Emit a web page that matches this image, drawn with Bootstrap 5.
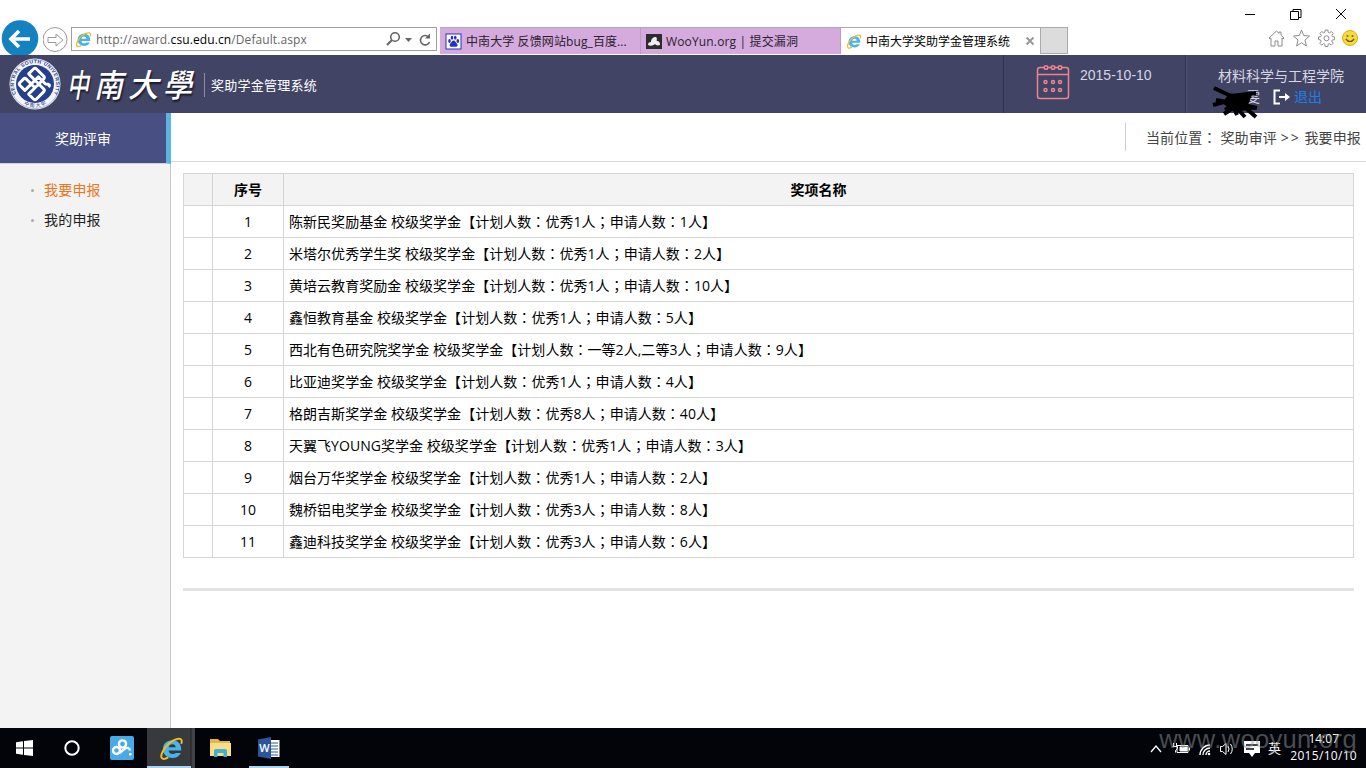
<!DOCTYPE html>
<html lang="zh-CN">
<head>
<meta charset="utf-8">
<title>中南大学奖助学金管理系统</title>
<link rel="stylesheet" href="https://cdn.jsdelivr.net/npm/bootstrap@5.3.0/dist/css/bootstrap.min.css">
<style>
body{width:1366px;height:768px;overflow:hidden;font:14px/20px "Open Sans","Noto Sans CJK SC",sans-serif;color:#000;background:#fff}
svg{display:block;flex:none}
.browser{height:55px}
.back{width:43px;height:35px;overflow:hidden}
.fwd{width:28px;margin-bottom:2px}
.address{width:366px;height:24px;border:1px solid #a0a0a0;margin-bottom:4px;padding-left:3px;color:#666;font-size:12px}
.address .url{letter-spacing:.1px;margin-left:4px;padding-top:1px}
.address b{font-weight:400;color:#000}
.tabs{height:28px;margin-left:3px;font-size:12px;border-bottom:1px solid #fff}
.tab-item{height:27px;border-top:1px solid #b9a3bd;background:#d4abdc;color:#2b2030;padding-left:5px;gap:4px;white-space:nowrap;border-right:1px solid #c19ac9}
.tab-item span{padding-top:1px}
.tab-item.current{background:#fff;color:#000;border-color:#aaa}
.newtab{width:27px;height:27px;background:#dcdcdc;border:1px solid #aaa;border-left:0}
.controls{width:126px;height:55px}
.winrow{height:28px;padding:8px 19px 0 5px}
.favrow{gap:8px;padding:1px 0 0 28px}
.site-head{height:58px;background:#424465;color:#d6d6e4}
.emblem{margin:2px 0 0 8px}
.brandname{width:142px;height:58px;padding-left:5px;font:italic 500 32px/56px "Noto Sans CJK TC",sans-serif;color:#fff;text-shadow:1px 2px 2px #15172c}
.brandname span{display:block;width:34px;transform:scaleX(var(--sx,.9));transform-origin:left}
.brandsub{border-left:1px solid #8d8da5;font-size:13px;line-height:24px;color:#fff;padding-left:6px;letter-spacing:.25px;margin-top:1px}
.datebox{width:182px;border-left:1px solid #30314e;padding:8px 0 0 32px;gap:10px;font:14px/24px "Liberation Sans",sans-serif}
.userbox{width:181px;border-left:1px solid #30314e;box-shadow:inset 1px 0 #4d4e72;padding:10px 0 0 32px}
.logout{color:#1b7ee8}
.main-area{height:615px}
.side{width:171px;background:#f3f3f3;border-right:1px solid #c4c4c4}
.side h2{width:171px;height:51px;background:#474f83;border-right:5px solid #59b4e1;border-bottom:1px solid #d0d2dd;color:#fff;font-size:14px;line-height:52px;margin:0;text-align:center}
.side ul{padding:11px 0 0 29px;margin:0;color:#222}
.side li{height:30px;gap:9px;letter-spacing:.2px}
.side li::before{content:"";width:3px;height:3px;border-radius:50%;background:#aaa;margin:0 1px 0 2px}
.side .on{color:#ee7520}
.crumbs{height:49px;border-bottom:1px solid #d9d9d9;color:#444}
.crumbs div{height:28px;border-left:1px solid #ccc;padding:5px 5px 0 20px;margin-top:10px;white-space:pre;letter-spacing:.13px}
.crumbs i{font-style:normal;letter-spacing:2px}
.awards{width:1171px;margin:11px 0 0 12px;border-collapse:collapse;table-layout:fixed}
.awards th,.awards td{height:32px;border:1px solid #d6d6d6;padding:1px 5px 0;text-align:center;line-height:20px;white-space:nowrap}
.awards th{background:#f3f3f3;font-weight:700}
.awards td:last-child{text-align:left;letter-spacing:.04px}
.pc{font-family:"Noto Sans CJK TC",sans-serif;line-height:1}
.rule{width:1171px;height:3px;background:#e3e3e3;margin:30px 0 0 12px}
.taskbar{height:40px;background:#02040a;color:#fff}
.task{height:40px;width:48px}
.task.active-app{background:linear-gradient(90deg,#38393d 43px,#222 44px,#424347 45px);margin-left:1px}
.task.active-app::after,.task.word::after{content:"";position:absolute;left:0;bottom:0;height:2px;width:44px;background:#a9d3ee}
.task.word{width:40px;margin-left:6px}.task.word::after{width:40px}
.tray{font-size:12px;line-height:17px;padding-right:9px}
.clock{text-align:right;width:68px;padding-right:0}
.watermark{position:absolute;right:9px;bottom:15px;font:25.5px/28px "Liberation Sans",sans-serif;letter-spacing:.35px;color:rgba(150,150,150,.5);white-space:nowrap}
.scribble{position:absolute;left:25px;top:31px}
</style>
</head>
<body class="d-flex flex-column">
<svg width="0" height="0" class="position-absolute"><defs>
<symbol id="ie" viewBox="0 0 24 24"><path d="M21 16.200c-1.400 3-4.400 4.800-8.200 4.800-5.400 0-9-3.300-9-8.500C3.800 7.500 7.500 4 12.800 4c5.600 0 8.800 3.500 8.600 10H9.200c.2 2.200 1.600 3.300 3.700 3.300 1.500 0 2.500-.4 3-1.100z M9.300 10.800h6.800c-.2-1.900-1.400-2.900-3.300-2.900s-3.100 1.100-3.500 2.900z" fill="#48b4ea" fill-rule="evenodd"/><path d="M21.300 7.500c1-2.200.7-4.100-.9-4.700C17.500 1.700 10.500 5 6.400 10.400 2.300 15.700.9 20.600 3.500 21.800c1.300.6 3.200 0 5.400-1.300" fill="none" stroke="#f2bb25" stroke-width="1.900"/></symbol>
</defs></svg>

<header class="browser d-flex align-items-end">
  <div class="back"><svg width="43" height="37"><circle cx="20" cy="18.500" r="18.300" fill="#1482c0"/><path d="M30 19H13M19 11l-8 8 8 8" fill="none" stroke="#fff" stroke-width="3.600"/></svg></div>
  <div class="fwd"><svg width="26" height="27"><circle cx="12" cy="13.500" r="12" fill="#fff" stroke="#999"/><path d="M5 11.500h8V8l7 6-7 6v-3.500H5z" fill="none" stroke="#999"/></svg></div>
  <div class="address d-flex align-items-center">
    <svg width="17" height="17"><use href="#ie"/></svg>
    <span class="url flex-grow-1">http://award.<b>csu.edu.cn</b>/Default.aspx</span>
    <svg width="52" height="20" fill="none" stroke="#666"><circle cx="11" cy="8" r="4.300" stroke-width="1.600"/><path d="M8 11l-5 5" stroke-width="2.200"/><path d="M21 9h7l-3.500 4z" fill="#666" stroke="none"/><path d="M45 8.500A4.700 4.700 0 1 0 45.500 13" stroke-width="1.600"/><path d="M46 4.500v5h-5z" fill="#666" stroke="none"/></svg>
  </div>
  <nav class="tabs d-flex">
    <div class="tab-item d-flex align-items-center" style="width:201px"><svg width="17" height="17"><rect x="1" y="1" width="15" height="15" fill="#fff" stroke="#2530c8"/><g fill="#2530c8"><ellipse cx="4.500" cy="8" rx="1.300" ry="1.900"/><ellipse cx="7" cy="4.700" rx="1.300" ry="1.900"/><ellipse cx="10.300" cy="4.700" rx="1.300" ry="1.900"/><ellipse cx="12.800" cy="8" rx="1.300" ry="1.900"/><path d="M8.600 7.500c1.600 0 2 1.800 3.200 3 1.600 1.700.6 3.500-1.400 3.300-1.200-.2-2.200-.2-3.400 0-2 .3-3.200-1.500-1.600-3.200 1.200-1.200 1.600-3.100 3.200-3.100z"/></g></svg><span style="letter-spacing:.1px">中南大学 反馈网站bug_百度...</span></div>
    <div class="tab-item d-flex align-items-center" style="width:200px"><svg width="16" height="17"><rect y="1" width="16" height="15" fill="#2c2c2c"/><path d="M2 12c0-2 1-3 3-3 0-3 2-5 5-5 2 2 0 3 1 4 2 0 3 1 3 4-3 1-4 0-5-1-2 2-5 2-7 1z" fill="#eee"/></svg><span style="letter-spacing:.15px">WooYun.org | 提交漏洞</span></div>
    <div class="tab-item current d-flex align-items-center" style="width:200px"><svg width="16" height="17"><use href="#ie"/></svg><span class="flex-grow-1">中南大学奖助学金管理系统</span><svg width="10" height="10" style="margin-right:5px"><path d="M1.500 1.500l7 7m0-7l-7 7" stroke="#999" stroke-width="2"/></svg></div>
    <div class="newtab"></div>
  </nav>
  <div class="controls ms-auto">
    <div class="winrow d-flex justify-content-between"><svg width="11" height="12"><path d="M0 6.500h10" stroke="#000"/></svg><svg width="12" height="12" fill="none" stroke="#000"><path d="M.5 3.500h8v8h-8zM3 3.500v-2h8v8H9"/></svg><svg width="12" height="12"><path d="M1 1l10 10m0-10L1 11" stroke="#000"/></svg></div>
    <div class="favrow d-flex align-items-center"><svg width="17" height="18" fill="none" stroke="#8c8c8c"><path d="M1 9l7.500-7L11 4.300V3h2v3.200L16 9l-1 1-1-.8V17h-4v-5H7v5H3V9.200l-1 .8z"/></svg><svg width="17" height="18" fill="none" stroke="#8c8c8c"><path d="M8.500 1l2.200 5.500 5.800.5L12 11l1.400 6-4.900-3.300L3.600 17 5 11 .5 7l5.800-.5z"/></svg><svg width="17" height="18" fill="none" stroke="#8c8c8c"><path d="M7.200 1h2.600l.4 2.300 1.300.6L13.400 2.500l1.800 1.900-1.300 1.900.5 1.300 2.200.4v2.600l-2.300.4-.5 1.300 1.400 1.900-1.900 1.900-1.900-1.400-1.200.5-.4 2.300H7.200l-.4-2.300-1.300-.5-1.900 1.400-1.800-1.900 1.300-1.900-.5-1.300L.5 10.600V8l2.200-.4.600-1.300L1.900 4.400l1.800-1.900 1.900 1.400 1.200-.6z"/><circle cx="8.500" cy="9.300" r="2.500"/></svg><svg width="17" height="18" style="margin-left:-1px"><circle cx="8" cy="9" r="7.500" fill="#f9d936" stroke="#d6ac28"/><circle cx="5.500" cy="7" r="1.100" fill="#674"/><circle cx="10.500" cy="7" r="1.100" fill="#674"/><path d="M3.800 10q4.200 5 8.400 0" fill="none" stroke="#665022" stroke-width="1.200"/></svg></div>
  </div>
</header>

<section class="site-head d-flex">
  <svg class="emblem" width="54" height="54" viewBox="0 0 54 54"><circle cx="27" cy="27" r="25.500" fill="#f2f4fa"/><circle cx="27" cy="27" r="24.500" fill="none" stroke="#8790b8" stroke-width=".6"/><circle cx="27" cy="27" r="19" fill="#24408c"/><path id="arc" d="M8.400 37A21 21 0 1 1 45.600 37" fill="none"/><text font-family="Liberation Sans" font-size="5" font-weight="700" fill="#33427f" textLength="86"><textPath href="#arc">CENTRAL SOUTH UNIVERSITY</textPath></text><path id="arc2" d="M15 46.800A23 23 0 0 0 39 46.800" fill="none"/><text font-family="Noto Sans CJK SC" font-size="5" fill="#33427f"><textPath href="#arc2" startOffset="1">中 南 大 学</textPath></text><g transform="translate(27 27) rotate(45) scale(1.060)" fill="none" stroke="#fff" stroke-width="2.700" stroke-linejoin="round"><path d="M2.500-2.500V-9Q2.500-11 .5-11H-9Q-11-11-11-9V-2.500H2.500M2.500-2.500H9Q11-2.500 11-.5V9Q11 11 9 11H2.500V-2.500M2.500 2.500H-9Q-11 2.500-11 4.500V9Q-11 11-9 11H-2.500V-7M-2.500 2.500V-7H7Q11-11 11-7"/></g></svg>
  <div class="brandname d-flex"><span style="--sx:.68;width:27px">中</span><span>南</span><span style="width:35px;--sx:.95">大</span><span>學</span></div>
  <div class="align-self-center"><div class="brandsub">奖助学金管理系统</div></div>
  <div class="datebox ms-auto d-flex"><svg width="34" height="38" fill="none" stroke="#ef8390" stroke-width="1.500"><rect x="1.500" y="4.500" width="31" height="31" rx="2.500"/><path d="M2 11.500h30"/><g fill="#424465"><circle cx="10" cy="4.500" r="1.800"/><circle cx="17" cy="4.500" r="1.800"/><circle cx="24" cy="4.500" r="1.800"/><circle cx="9.500" cy="19" r="1.500"/><circle cx="17" cy="19" r="1.500"/><circle cx="24" cy="19" r="1.500"/><circle cx="9.500" cy="27" r="1.500"/><circle cx="17" cy="27" r="1.500"/><circle cx="24" cy="27" r="1.500"/></g></svg><span>2015-10-10</span></div>
  <div class="userbox position-relative"><div class="text-nowrap" style="line-height:22px">材料科学与工程学院</div>
    <div class="d-flex align-items-center"><span style="width:55px;padding-left:28px">雯</span><svg width="18" height="16" fill="none" stroke="#fff" stroke-width="2"><path d="M7 1.500H1.500v13H7M6 8h9"/><path d="M12 4l5 4-5 4z" fill="#fff" stroke="none"/></svg><a class="logout text-decoration-none" style="margin-left:3px" href="#">退出</a></div>
    <svg class="scribble" width="50" height="34" fill="none" stroke="#000" stroke-width="4"><path d="M3 2L20 10 45 7M2 19L20 14M5 14L38 20M14 24L26 16M13 28L28 18 46 22M24 20L34 31M30 18L45 31M22 20L26 29"/><path d="M18 8L40 10 36 20 44 23 22 25 12 17z" fill="#000" stroke-width="1"/></svg>
  </div>
</section>

<main class="main-area d-flex">
  <aside class="side flex-shrink-0"><h2 class="fw-normal">奖助评审</h2><ul class="list-unstyled"><li class="d-flex align-items-center on">我要申报</li><li class="d-flex align-items-center">我的申报</li></ul></aside>
  <div class="flex-grow-1">
    <div class="crumbs d-flex justify-content-end"><div>当前位置<span class="pc" lang="zh-TW">：</span> 奖助审评 <i>&gt;&gt;</i> 我要申报</div></div>
    <table class="awards">
      <colgroup><col style="width:29px"><col style="width:71px"><col></colgroup>
      <thead><tr><th></th><th>序号</th><th>奖项名称</th></tr></thead>
      <tbody>
      <tr><td></td><td>1</td><td>陈新民奖励基金 校级奖学金【计划人数<span class="pc" lang="zh-TW">：</span>优秀1人<span class="pc" lang="zh-TW">；</span>申请人数<span class="pc" lang="zh-TW">：</span>1人】</td></tr>
      <tr><td></td><td>2</td><td>米塔尔优秀学生奖 校级奖学金【计划人数<span class="pc" lang="zh-TW">：</span>优秀1人<span class="pc" lang="zh-TW">；</span>申请人数<span class="pc" lang="zh-TW">：</span>2人】</td></tr>
      <tr><td></td><td>3</td><td>黄培云教育奖励金 校级奖学金【计划人数<span class="pc" lang="zh-TW">：</span>优秀1人<span class="pc" lang="zh-TW">；</span>申请人数<span class="pc" lang="zh-TW">：</span>10人】</td></tr>
      <tr><td></td><td>4</td><td>鑫恒教育基金 校级奖学金【计划人数<span class="pc" lang="zh-TW">：</span>优秀1人<span class="pc" lang="zh-TW">；</span>申请人数<span class="pc" lang="zh-TW">：</span>5人】</td></tr>
      <tr><td></td><td>5</td><td>西北有色研究院奖学金 校级奖学金【计划人数<span class="pc" lang="zh-TW">：</span>一等2人,二等3人<span class="pc" lang="zh-TW">；</span>申请人数<span class="pc" lang="zh-TW">：</span>9人】</td></tr>
      <tr><td></td><td>6</td><td>比亚迪奖学金 校级奖学金【计划人数<span class="pc" lang="zh-TW">：</span>优秀1人<span class="pc" lang="zh-TW">；</span>申请人数<span class="pc" lang="zh-TW">：</span>4人】</td></tr>
      <tr><td></td><td>7</td><td>格朗吉斯奖学金 校级奖学金【计划人数<span class="pc" lang="zh-TW">：</span>优秀8人<span class="pc" lang="zh-TW">；</span>申请人数<span class="pc" lang="zh-TW">：</span>40人】</td></tr>
      <tr><td></td><td>8</td><td>天翼飞YOUNG奖学金 校级奖学金【计划人数<span class="pc" lang="zh-TW">：</span>优秀1人<span class="pc" lang="zh-TW">；</span>申请人数<span class="pc" lang="zh-TW">：</span>3人】</td></tr>
      <tr><td></td><td>9</td><td>烟台万华奖学金 校级奖学金【计划人数<span class="pc" lang="zh-TW">：</span>优秀1人<span class="pc" lang="zh-TW">；</span>申请人数<span class="pc" lang="zh-TW">：</span>2人】</td></tr>
      <tr><td></td><td>10</td><td>魏桥铝电奖学金 校级奖学金【计划人数<span class="pc" lang="zh-TW">：</span>优秀3人<span class="pc" lang="zh-TW">；</span>申请人数<span class="pc" lang="zh-TW">：</span>8人】</td></tr>
      <tr><td></td><td>11</td><td>鑫迪科技奖学金 校级奖学金【计划人数<span class="pc" lang="zh-TW">：</span>优秀3人<span class="pc" lang="zh-TW">；</span>申请人数<span class="pc" lang="zh-TW">：</span>6人】</td></tr>
      </tbody>
    </table>
    <div class="rule"></div>
  </div>
</main>

<footer class="taskbar d-flex position-relative">
  <div class="task d-flex align-items-center justify-content-center"><svg width="17" height="16" fill="#fff"><path d="M0 2.300L7 1.200V7.500H0zM8 1L17 0V7.500H8zM0 8.500H7V14.800L0 13.700zM8 8.500H17V16L8 15z"/></svg></div>
  <div class="task d-flex align-items-center justify-content-center"><svg width="16" height="16"><circle cx="8" cy="8" r="6.700" fill="none" stroke="#fff" stroke-width="2"/></svg></div>
  <div class="task d-flex align-items-center justify-content-center" style="width:50px;padding-left:2px"><svg width="24" height="24" fill="none" stroke="#fff" stroke-width="2.400"><rect width="24" height="24" rx="2" fill="#49aae8" stroke="none"/><circle cx="12.500" cy="8" r="3.600"/><circle cx="6.500" cy="14.500" r="3.500"/><path d="M9.500 17L15 12.500q4-2 5 2"/><circle cx="20.300" cy="18.300" r="1.300" fill="#fff" stroke="none"/></svg></div>
  <div class="task active-app position-relative d-flex align-items-center justify-content-center"><svg width="25" height="25"><use href="#ie"/></svg></div>
  <div class="task d-flex align-items-center justify-content-center" style="padding-left:2px"><svg width="23" height="20"><path d="M1 1h8l2 2h10v14H1z" fill="#e5b44d"/><path d="M1 5h21v13H1z" fill="#fbdd86"/><path d="M5 19v-6q0-2 2-2h9q2 0 2 2v6h-3.500v-4h-6v4z" fill="#3fb1d7"/></svg></div>
  <div class="task word position-relative d-flex align-items-center justify-content-center"><svg width="24" height="22"><rect x="11" y="3" width="11.500" height="17" fill="#fff"/><path d="M14 6h7M14 9h7M14 12h7M14 15h7M14 18h7" stroke="#2a579a"/><path d="M1 2.500L14 0v22L1 19.500z" fill="#2a579a"/><text x="2.200" y="15" font-family="Open Sans" font-size="11" font-weight="600" fill="#fff">W</text></svg></div>
  <div class="tray ms-auto d-flex align-items-center">
    <svg width="118" height="20" fill="none" stroke="#fff"><path d="M1 14l5-6 5 6" stroke-width="1.300"/><path d="M27 7.500h11v7H27zM39.500 9.500v3" /><path d="M30 9h7v4h-7z" fill="#fff"/><path d="M23.500 5v3m3-3v3M22.500 8.500h5v2l-2 2v2" /><path d="M50 17A10 10 0 0 1 60 7M53 17a7 7 0 0 1 7-7M56 17a4 4 0 0 1 4-4" stroke-width="1.400"/><circle cx="59" cy="16" r="1.300" fill="#fff" stroke="none"/><path d="M70.500 8.500h2l3.500-3v11l-3.500-3h-2zM78 8q2 3 0 6M80.500 6q3.500 5 0 10"/><path d="M94 3h16v12h-5l-3 4-3-4h-5z" fill="#fff" stroke="none"/><path d="M96 7h12M96 11h8" stroke="#05070b" stroke-width="1.300"/></svg>
    <span style="font-size:13px;width:21px">英</span>
    <div class="clock" style="letter-spacing:.3px;margin-top:-2px"><div style="padding-right:18px;letter-spacing:0">14:07</div><div>2015/10/10</div></div>
  </div>
  <div class="watermark">www.wooyun.org</div>
</footer>
<script src="https://cdn.jsdelivr.net/npm/bootstrap@5.3.0/dist/js/bootstrap.bundle.min.js"></script>
</body>
</html>
